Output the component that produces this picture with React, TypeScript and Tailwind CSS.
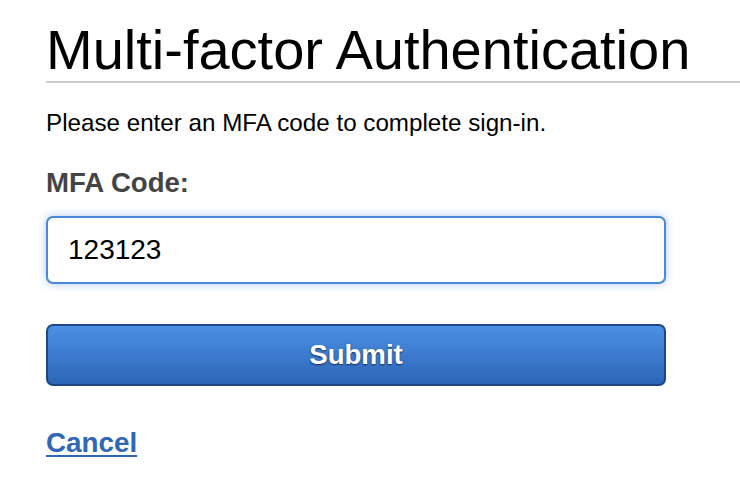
export default function App() {
  return (
    <div className="min-h-[494px] w-[740px] bg-white pl-[46px] text-black font-['Liberation_Sans',Arial,sans-serif]">
      {/* Page header */}
      <div className="border-b-2 border-[#cccccc] pt-[19px]">
        <h1 className="text-[56px] leading-[62px] font-normal">Multi-factor Authentication</h1>
      </div>

      <form className="w-[620px]" onSubmit={(e) => e.preventDefault()}>
        <p className="mt-[26px] text-[24.2px] leading-[28px]">Please enter an MFA code to complete sign-in.</p>

        <label htmlFor="mfa" className="mt-[30px] block text-[27.6px] leading-[32px] font-bold text-[#444444]">
          MFA Code:
        </label>

        <input
          id="mfa"
          type="text"
          defaultValue="123123"
          className="mt-[17px] block h-[68px] w-full rounded-[7px] border-2 border-[#4a88da] bg-white px-[20px] text-[28px] text-black shadow-[0_0_9px_rgba(74,136,218,0.45)] outline-none"
        />

        <button
          type="submit"
          className="mt-[40px] block h-[62px] w-full rounded-[7px] border-2 border-[#1f4785] bg-gradient-to-b from-[#4b90e3] to-[#2d66b8] text-[27.6px] font-bold text-white [text-shadow:0_1px_2px_rgba(0,0,0,0.65)]"
        >
          Submit
        </button>

        <div className="mt-[41px]">
          <a href="#" className="text-[27.8px] leading-[32px] font-bold text-[#2f67b5] underline underline-offset-[3px]">
            Cancel
          </a>
        </div>
      </form>
    </div>
  );
}
